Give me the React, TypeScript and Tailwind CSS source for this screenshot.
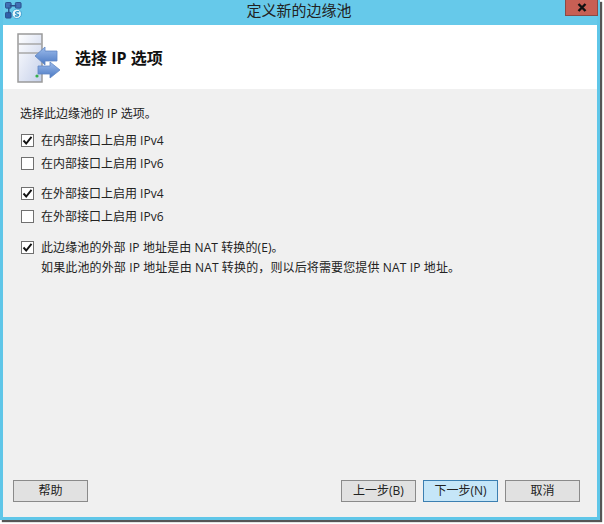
import React from 'react'

const font = { fontFamily: '"Open Sans", "Noto Sans CJK SC", sans-serif' }

function AppIcon() {
  return (
    <svg width="17" height="17" viewBox="0 0 18 18">
      <rect x="0.5" y="0.5" width="6" height="6" rx="1" fill="#3f6fb5" stroke="#2a4f8a" />
      <rect x="11" y="0.5" width="6" height="6" rx="1" fill="#3f6fb5" stroke="#2a4f8a" />
      <rect x="0.5" y="11" width="6" height="6" rx="1" fill="#2f5fa8" stroke="#2a4f8a" />
      <path d="M4 6 L4 12 M5 4 L12 4" stroke="#2a4f8a" strokeWidth="1.5" />
      <circle cx="12.5" cy="12.5" r="5" fill="#e8f6fb" stroke="#3a9fd0" />
      <path d="M15 10.5 C13 9.5 10.5 10.5 11.5 12 C12.5 13.5 15 12.8 14.3 14.2 C13.6 15.4 11.5 15 10.5 14.4" fill="none" stroke="#2a8fc4" strokeWidth="1.3" />
    </svg>
  )
}

function ServerIcon() {
  return (
    <svg width="44" height="50" viewBox="0 0 44 50">
      <defs>
        <linearGradient id="srv" x1="0" y1="0" x2="1" y2="1">
          <stop offset="0" stopColor="#ffffff" />
          <stop offset="1" stopColor="#c5d0ea" />
        </linearGradient>
        <linearGradient id="arr" x1="0" y1="0" x2="0" y2="1">
          <stop offset="0" stopColor="#9dbcec" />
          <stop offset="1" stopColor="#4a78c2" />
        </linearGradient>
      </defs>
      <rect x="1" y="1" width="24" height="48" fill="url(#srv)" stroke="#9a9a9a" strokeWidth="1.5" />
      <path d="M1 11 H25 M1 20 H25" stroke="#a8a8a8" strokeWidth="1.5" />
      <circle cx="20" cy="43" r="1.6" fill="#35b04a" />
      <path d="M18 23 L28 14 V18 H40 V28 H28 V32 Z" fill="url(#arr)" stroke="#5f86c4" strokeWidth="0.8" />
      <path d="M21 33 H33 V29 L43 37 L33 45 V41 H21 Z" fill="url(#arr)" stroke="#5f86c4" strokeWidth="0.8" />
    </svg>
  )
}

function Check({ checked, text, wide }: { checked?: boolean; text: string; wide?: boolean }) {
  return (
    <div className="flex items-center h-[15px]">
      <span className="w-[13px] h-[13px] border border-[#707070] bg-white flex items-center justify-center shrink-0">
        {checked && (
          <svg width="11" height="11" viewBox="0 0 11 11">
            <path d="M1.5 5.5 L4.2 8.5 L9.5 1.8" fill="none" stroke="#111" strokeWidth="1.9" />
          </svg>
        )}
      </span>
      <span className={wide ? 'ml-[7px] text-[12px] leading-[15px] tracking-[0.1px] text-[#222] whitespace-nowrap' : 'ml-[7px] text-[12px] leading-[15px] text-[#222] whitespace-nowrap'}>
        {text}
      </span>
    </div>
  )
}

function Btn({ label, active }: { label: string; active?: boolean }) {
  return (
    <button
      className={
        active
          ? 'w-[75px] h-[22px] border border-[#3c7fb1] bg-[#c5e6f8] text-[12px] text-[#222]'
          : 'w-[75px] h-[22px] border border-[#8a8a8a] bg-[#e1e1e1] text-[12px] text-[#222]'
      }
    >
      {label}
    </button>
  )
}

export default function App() {
  return (
    <div className="w-[604px] h-[524px] bg-white" style={font}>
      <div className="w-[600px] h-[520px] flex flex-col border-r-[3px] border-b-[3px] border-l-[3px] border-[#5fc6e8] shadow-[2px_2px_1px_#555] relative">
        <div className="h-[25px] bg-[#66c9ea] flex items-center justify-center pb-[5px] pr-[2px] text-[15px] text-[#222] shrink-0">
          定义新的边缘池
        </div>
        <div className="absolute left-[2px] top-[2px]">
          <AppIcon />
        </div>
        <div className="absolute right-[-1px] top-0 w-[33px] h-[16px] bg-[#c75f54] border border-[#8a4a45] border-t-0 flex items-center justify-center">
          <svg width="10" height="9" viewBox="0 0 10 9">
            <path d="M1.5 1 L8.5 8 M8.5 1 L1.5 8" stroke="#111" strokeWidth="2.4" />
          </svg>
        </div>
        <div className="h-[64px] bg-white flex items-center pl-[14px] pt-[1px] shrink-0">
          <ServerIcon />
          <span className="ml-[14px] text-[16px] font-bold text-[#111]">选择 IP 选项</span>
        </div>
        <div className="flex-1 bg-[#f0f0f0] flex flex-col pl-[17px] pt-[17px] pr-[17px] pb-[15px]">
          <div className="text-[12px] leading-[16px] text-[#222]">选择此边缘池的 IP 选项。</div>
          <div className="mt-[11px] flex flex-col gap-[8px] pl-[1px]">
            <Check checked text="在内部接口上启用 IPv4" />
            <Check text="在内部接口上启用 IPv6" />
          </div>
          <div className="mt-[15px] flex flex-col gap-[8px] pl-[1px]">
            <Check checked text="在外部接口上启用 IPv4" />
            <Check text="在外部接口上启用 IPv6" />
          </div>
          <div className="mt-[16px] pl-[1px]">
            <Check checked wide text="此边缘池的外部 IP 地址是由 NAT 转换的(E)。" />
            <div className="ml-[20px] mt-[5px] text-[12px] leading-[16px] tracking-[0.13px] text-[#222] whitespace-nowrap">
              如果此池的外部 IP 地址是由 NAT 转换的，则以后将需要您提供 NAT IP 地址。
            </div>
          </div>
          <div className="mt-auto flex items-center -ml-[7px]">
            <Btn label="帮助" />
            <div className="ml-auto flex gap-[7px]">
              <Btn label="上一步(B)" />
              <Btn label="下一步(N)" active />
              <Btn label="取消" />
            </div>
          </div>
        </div>
      </div>
    </div>
  )
}
